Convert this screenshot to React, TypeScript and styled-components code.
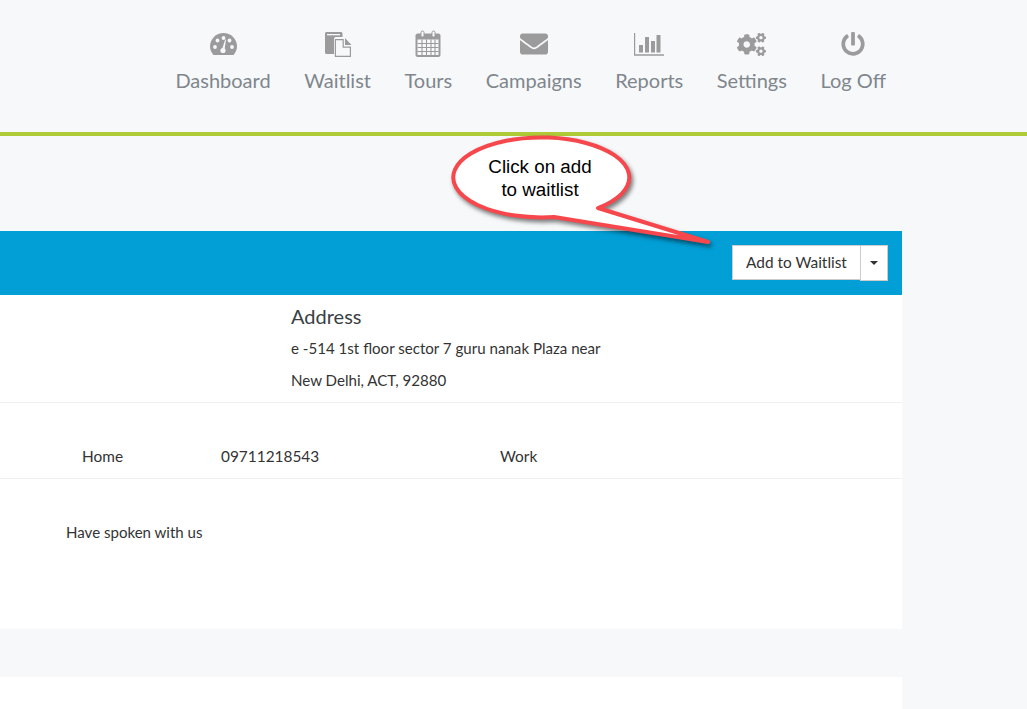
import React from "react";
import styled, { createGlobalStyle } from "styled-components";
import { FaCogs, FaEnvelope, FaPowerOff } from "react-icons/fa";

const GlobalStyle = createGlobalStyle`
  html, body {
    margin: 0;
    padding: 0;
    height: 709px;
    overflow: hidden;
    background: #f6f8fa;
    font-family: Lato, "Open Sans", sans-serif;
    color: #333;
  }
`;

const Page = styled.div`
  position: relative;
  width: 1027px;
  height: 709px;
  overflow: hidden;
`;
const Header = styled.header`
  display: flex;
  justify-content: flex-end;
  height: 103px;
  padding: 29px 141px 0 0;
  border-bottom: 4px solid #afcb37;
`;
const NavItem = styled.a`
  display: flex;
  flex-direction: column;
  align-items: center;
  margin-left: 33.5px;
  font-size: 20px;
  line-height: 24px;
  color: #80868c;
`;
const NavIcon = styled.span`
  display: flex;
  align-items: center;
  justify-content: center;
  height: 30px;
  margin-bottom: 9px;
  color: #9b9b9b;
`;
const Main = styled.main`
  width: 902px;
  padding-top: 95px;
`;
const BlueBar = styled.div`
  display: flex;
  justify-content: flex-end;
  align-items: center;
  height: 64px;
  padding-right: 14px;
  background: #019fd6;
`;
const SplitButton = styled.div`
  display: flex;
  height: 36px;
`;
const ActionButton = styled.button`
  box-sizing: border-box;
  width: 129px;
  height: 35px;
  border: 1px solid #ccc;
  background: #fff;
  color: #333;
  font: 15.4px Lato, sans-serif;
  padding: 0 0 2px;
`;
const CaretButton = styled.button`
  box-sizing: border-box;
  display: flex;
  align-items: center;
  justify-content: center;
  width: 28px;
  height: 36px;
  margin-left: -1px;
  border: 1px solid #ccc;
  background: #fff;
  padding: 0;
`;
const Caret = styled.span`
  width: 0;
  height: 0;
  border-left: 4px solid transparent;
  border-right: 4px solid transparent;
  border-top: 4px solid #333;
`;
const Panel = styled.section`
  background: #fff;
`;
const AddressRow = styled.div`
  box-sizing: border-box;
  height: 108px;
  padding: 9px 0 0 291px;
  border-bottom: 1px solid #eef0f2;
`;
const AddressTitle = styled.div`
  font-size: 20px;
  line-height: 24px;
  margin-bottom: 10px;
  color: #3a3f44;
`;
const AddressLine = styled.div`
  font-size: 15.1px;
  line-height: 20px;
  margin-bottom: 12px;
  color: #333;
`;
const PhoneRow = styled.div`
  box-sizing: border-box;
  display: grid;
  grid-template-columns: 139px 279px 1fr;
  height: 76px;
  padding: 43px 0 0 82px;
  border-bottom: 1px solid #eef0f2;
  font-size: 15.4px;
  line-height: 20px;
`;
const NoteRow = styled.div`
  height: 150px;
  box-sizing: border-box;
  padding: 43px 0 0 66px;
  font-size: 15.05px;
  line-height: 20px;
`;
const NextPanel = styled.section`
  height: 40px;
  margin-top: 48px;
  background: #fff;
`;
const Callout = styled.div`
  position: absolute;
  left: 440px;
  top: 130px;
  width: 290px;
  height: 125px;
`;
const CalloutLabel = styled.div`
  position: absolute;
  left: 15px;
  top: 26px;
  width: 170px;
  font: 18.8px/22.5px "Liberation Sans", Arial, sans-serif;
  color: #000;
  text-align: center;
`;

const DashboardIcon = () => (
  <svg width="27" height="22" viewBox="0 0 27 22">
    <path d="M3.500 22C1.300 19.600 0 16.700 0 13.500 0 6 6 0 13.500 0S27 6 27 13.500c0 3.200-1.300 6.100-3.500 8.500z" fill="#9b9b9b" />
    <g fill="#f6f8fa">
      <circle cx="5" cy="14" r="1.900" />
      <circle cx="7.500" cy="7.500" r="1.900" />
      <circle cx="13.500" cy="5" r="1.900" />
      <circle cx="19.500" cy="7.500" r="1.900" />
      <circle cx="22" cy="14" r="1.900" />
      <circle cx="13" cy="17.500" r="2.600" />
      <path d="M12 16.500L15.200 6.500 16 6.700 14.400 17.500z" />
    </g>
  </svg>
);

const WaitlistIcon = () => (
  <svg width="28" height="27" viewBox="0 0 28 27" fill="#9b9b9b">
    <path d="M1 2.500C1 1.600 1.600 1 2.500 1H17c.8 0 1.500.6 1.500 1.500V6H12c-1.100 0-2 .9-2 2v15H2.500C1.600 23 1 22.400 1 21.500z" />
    <rect x="3" y="3" width="13" height="1.300" fill="#f6f8fa" />
    <path d="M21 7l6.500 7H21z" />
    <path d="M10.800 8h9v7.500h7.200V26H10.800z" />
    <path d="M12 9.200h6.600v7.500h7.200v8.100H12z" fill="#f6f8fa" />
  </svg>
);

const CalendarIcon = () => (
  <svg width="26" height="28" viewBox="0 0 26 28">
    <path d="M2.500 3.500h21c1 0 2 1 2 2V25c0 1-1 2-2 2h-21c-1 0-2-1-2-2V5.500c0-1 1-2 2-2z" fill="#9b9b9b" />
    <rect x="6" y="1" width="3" height="6" rx="1.500" fill="#f6f8fa" stroke="#9b9b9b" />
    <rect x="17" y="1" width="3" height="6" rx="1.500" fill="#f6f8fa" stroke="#9b9b9b" />
    <path d="M2.500 9.500h21V25h-21z" fill="#f6f8fa" />
    <path d="M7 9.500V25M11.500 9.500V25M16 9.500V25M20 9.500V25M2.500 13.500h21M2.500 17.500h21M2.500 21.500h21" stroke="#9b9b9b" strokeWidth="1.100" fill="none" />
  </svg>
);

const ReportsIcon = () => (
  <svg width="30" height="23" viewBox="0 0 30 23" fill="#9b9b9b">
    <path d="M0 0h1.200v21.300H30v1.500H0z" />
    <rect x="5" y="12" width="4" height="7.500" />
    <rect x="11" y="4" width="4" height="15.500" />
    <rect x="17" y="8" width="4" height="11.500" />
    <rect x="22.500" y="2" width="4" height="17.500" />
  </svg>
);

const navItems = [
  { label: "Dashboard", icon: <DashboardIcon /> },
  { label: "Waitlist", icon: <WaitlistIcon /> },
  { label: "Tours", icon: <CalendarIcon /> },
  { label: "Campaigns", icon: <FaEnvelope size={28} /> },
  { label: "Reports", icon: <ReportsIcon /> },
  { label: "Settings", icon: <FaCogs size={29} /> },
  { label: "Log Off", icon: <FaPowerOff size={24} /> },
];

export default function App() {
  return (
    <Page>
      <GlobalStyle />
      <Header>
        {navItems.map(item => (
          <NavItem key={item.label}>
            <NavIcon>{item.icon}</NavIcon>
            {item.label}
          </NavItem>
        ))}
      </Header>
      <Main>
        <BlueBar>
          <SplitButton>
            <ActionButton>Add to Waitlist</ActionButton>
            <CaretButton>
              <Caret />
            </CaretButton>
          </SplitButton>
        </BlueBar>
        <Panel>
          <AddressRow>
            <AddressTitle>Address</AddressTitle>
            <AddressLine>e -514 1st floor sector 7 guru nanak Plaza near</AddressLine>
            <AddressLine>New Delhi, ACT, 92880</AddressLine>
          </AddressRow>
          <PhoneRow>
            <span>Home</span>
            <span>09711218543</span>
            <span>Work</span>
          </PhoneRow>
          <NoteRow>Have spoken with us</NoteRow>
        </Panel>
        <NextPanel />
      </Main>
      <Callout>
        <svg width="290" height="125" viewBox="0 0 290 125" style={{ filter: "drop-shadow(2px 3px 2px rgba(0,0,0,.5))" }}>
          <path
            d="M114 87 A88 40 0 1 1 158 78 L268 112 Z"
            fill="#fff"
            stroke="#f6484c"
            strokeWidth="4"
            strokeLinejoin="round"
          />
        </svg>
        <CalloutLabel>
          Click on add
          <br />
          to waitlist
        </CalloutLabel>
      </Callout>
    </Page>
  );
}
